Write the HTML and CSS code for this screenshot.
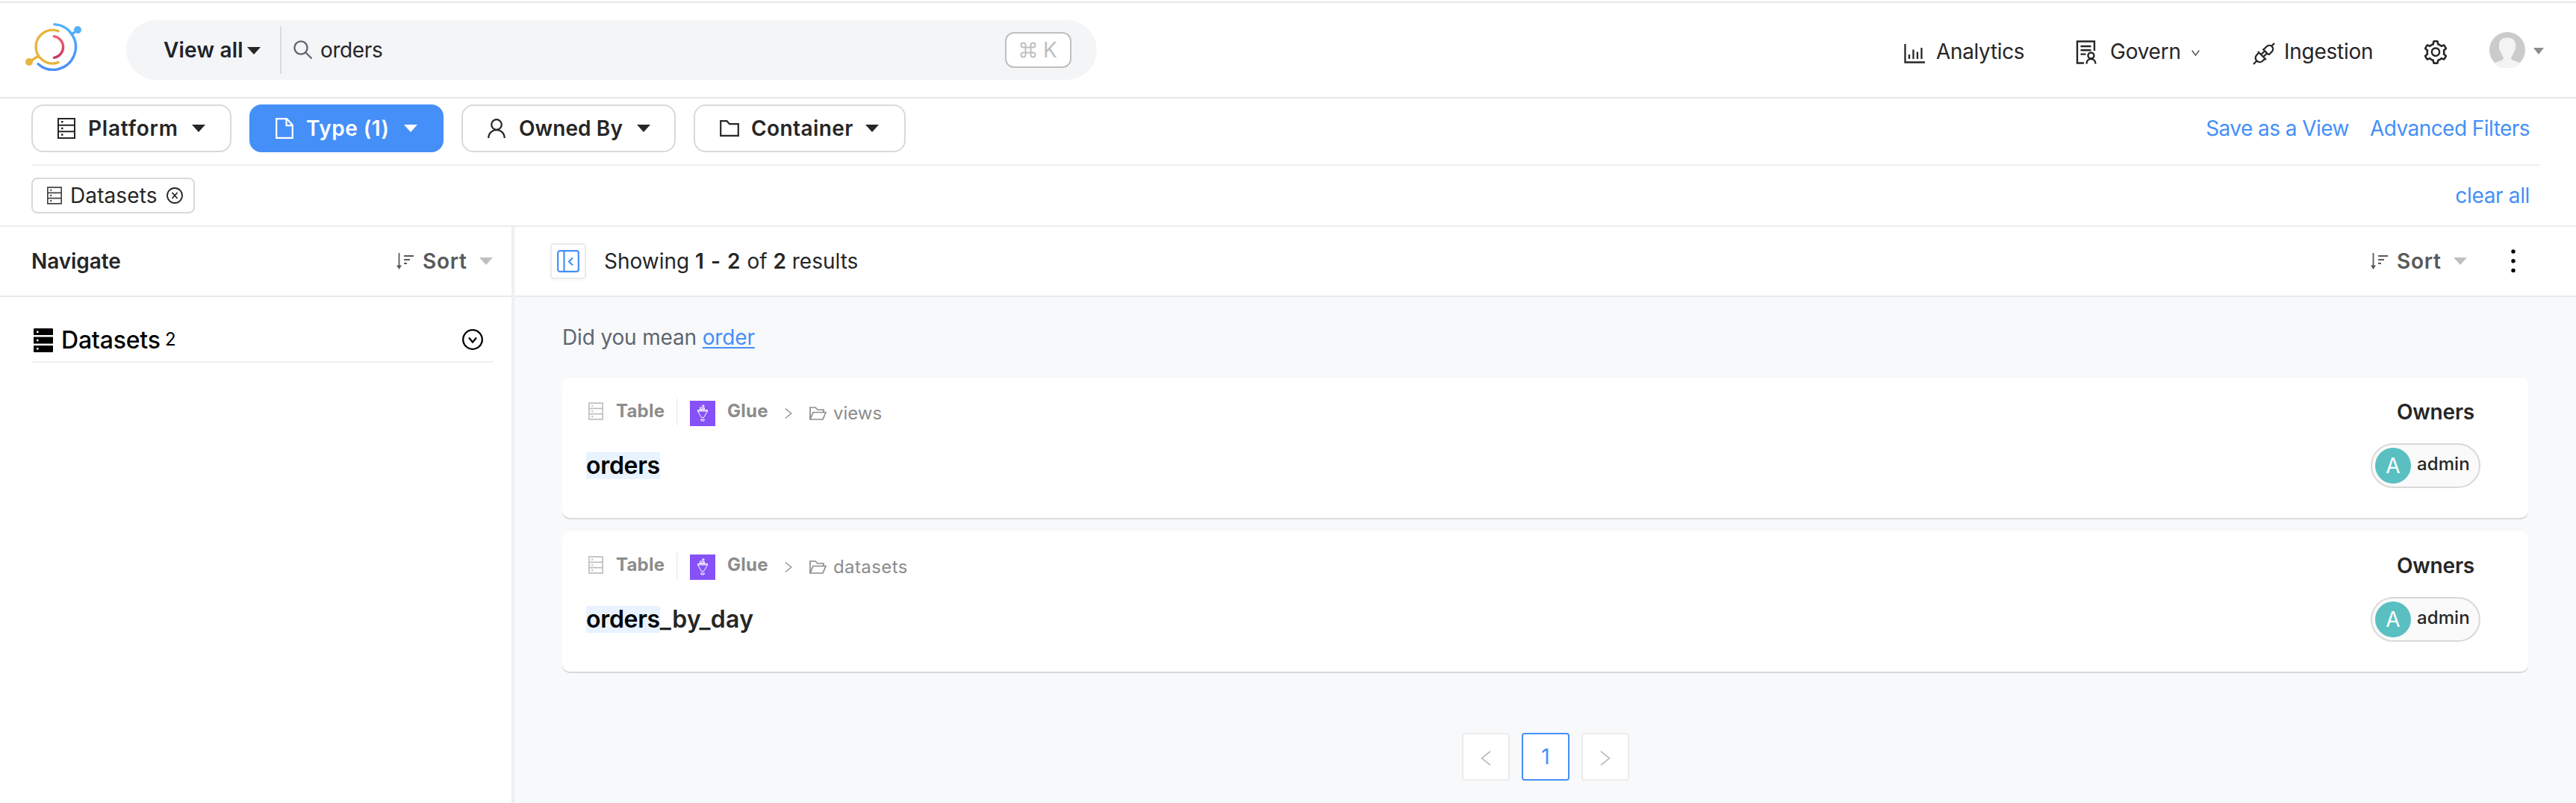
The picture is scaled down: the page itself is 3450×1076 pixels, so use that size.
FILE: index.html
```
<!DOCTYPE html>
<html lang="en">
<head>
<meta charset="utf-8">
<title>orders - Search</title>
<link rel="stylesheet" href="styles.css">
</head>
<body>
<svg class="sprite" aria-hidden="true">
  <symbol id="db" viewBox="0 0 24 28"><path d="M1 1h22v26H1zM1 9.7h22M1 18.3h22" fill="none" stroke="currentColor" stroke-width="2"/><path d="M5 4h2.500v2.500H5zM5 12.700h2.500v2.500H5zM5 21.300h2.500v2.500H5z" fill="currentColor"/></symbol>
  <symbol id="caret" viewBox="0 0 18 11" preserveAspectRatio="none"><path d="M0 0h18L9 11z" fill="currentColor"/></symbol>
  <symbol id="sort" viewBox="0 0 24 22"><path d="M3.5 0v18" fill="none" stroke="currentColor" stroke-width="1.8"/><path d="M0 16.5h7L3.5 22z" fill="currentColor"/><path d="M10 4h13M10 9h8M10 14h4" fill="none" stroke="currentColor" stroke-width="2.2"/></symbol>
  <symbol id="folder-open" viewBox="0 0 23 18"><path d="M1 17V1h7l3 3h8v3.500M1 17L5 7.500h17L18 17z" fill="none" stroke="currentColor" stroke-width="1.700"/></symbol>
  <symbol id="glue" viewBox="0 0 34 34"><path fill="#8652f8" d="M0 0h34v34H0z"/><g fill="none" stroke="#fff" stroke-width="1"><path d="M10.500 12.500h13v1.500l-5 8.500h-3l-5-8.500zM10.500 14h13"/><path d="M13.500 9h2.500v2.500h-2.500zM17.500 9.500h2v2h-2zM16.800 6h2v2h-2zM14.500 25h5l-1 2h-3z"/></g></symbol>
  <symbol id="next" viewBox="0 0 14 20"><path d="M1 .8L12.500 10 1 19.200" fill="none" stroke="currentColor" stroke-width="1.8"/></symbol>
</svg>

<header class="header">
  <svg class="logo" viewBox="0 0 330 270" fill="none" stroke-width="10" stroke-linecap="round">
    <defs><linearGradient id="blue" x1="0" y1="0" x2="0" y2="1"><stop offset="0" stop-color="#55b1fb"/><stop offset="1" stop-color="#468ff9"/></linearGradient>
    <linearGradient id="red" x1="0" y1="0" x2="0" y2="1"><stop offset="0" stop-color="#f0616b"/><stop offset="1" stop-color="#c93a62"/></linearGradient></defs>
    <path d="M158 38A91 91 0 1 1 93 197" stroke="url(#blue)"/>
    <path d="M252 60L228 78" stroke="#50a9fb"/><circle cx="252" cy="60" r="15" fill="#55b1fb"/>
    <path d="M174 65A67 67 0 1 0 174 191M95 165L57 189" stroke="#e6b53f"/><circle cx="57" cy="189" r="15" fill="#e6b53f"/>
    <path d="M157 86A43.500 43.500 0 0 1 157 172" stroke="url(#red)"/>
  </svg>
  <div class="search">
    <span class="view-all">View all</span>
    <svg class="view-caret"><use href="#caret"/></svg>
    <span class="search-line"></span>
    <svg class="search-icon" viewBox="0 0 26 26" fill="none" stroke="#5f6672" stroke-width="2.300"><circle cx="10" cy="10" r="8.600"/><path d="M16 16l8.500 8.500"/></svg>
    <span class="query">orders</span>
    <span class="shortcut"><svg viewBox="0 0 22 22" fill="none" stroke="currentColor" stroke-width="2"><path d="M7.500 7.500h7v7h-7zM7.500 7.500H4.500a3 3 0 1 1 3-3zM14.500 7.500v-3a3 3 0 1 1 3 3zM14.500 14.500h3a3 3 0 1 1-3 3zM7.500 14.500v3a3 3 0 1 1-3-3z"/></svg>K</span>
  </div>
  <nav class="nav">
    <a class="nav-item analytics"><svg viewBox="0 0 28 26" fill="none" stroke="currentColor" stroke-width="2.300"><path d="M1.500 0v24.500H28M7 20v-6M12.500 20V7.500M18 20v-9.500M23.500 20V5"/></svg>Analytics</a>
    <a class="nav-item govern"><svg viewBox="0 0 28 32" fill="none" stroke="currentColor" stroke-width="2.400"><path d="M25 14V1.500H2v29h9M6.500 8h14M6.500 13.300h14M6.500 18.600h7"/><circle cx="20.500" cy="20.500" r="4"/><path d="M14.500 31.500c0-8.500 12-8.500 12 0"/></svg><span>Govern</span><svg class="chevron" viewBox="0 0 11 8"><path d="M.7.700l4.800 6.300L10.300.7" fill="none" stroke="currentColor" stroke-width="1.200"/></svg></a>
    <a class="nav-item ingestion"><svg viewBox="0 0 30 30" fill="none" stroke="currentColor" stroke-width="2.300"><path d="M29 1l-4 4M13.500 8.500l8 8M14.500 9.500l4-4c5-5 12 2 7 7l-4 4M1 29l4-4M7 12l11 11M8.500 13.500l-3 3c-5.500 5.500 2.500 13 8 8l3-3M11.500 16l4-4M14.500 19l4-4"/></svg>Ingestion</a>
    <svg class="gear" viewBox="64 64 896 896"><path fill="currentColor" d="M924.8 625.7l-65.5-56c3.1-19 4.7-38.4 4.7-57.8s-1.6-38.8-4.7-57.8l65.5-56a32.03 32.03 0 009.3-35.2l-.9-2.6a443.74 443.74 0 00-79.7-137.9l-1.8-2.1a32.12 32.12 0 00-35.1-9.5l-81.3 28.9c-30-24.6-63.5-44-99.7-57.6l-15.7-85a32.05 32.05 0 00-25.8-25.700l-2.7-.5c-52.1-9.4-106.900-9.4-159 0l-2.7.5a32.050 32.050 0 00-25.800 25.700l-15.800 85.400a351.860 351.860 0 00-99 57.400l-81.900-29.100a32 32 0 00-35.100 9.500l-1.800 2.100a446.020 446.020 0 00-79.700 137.900l-.9 2.600c-4.500 12.500-.8 26.500 9.300 35.200l66.300 56.600c-3.100 18.800-4.600 38-4.600 57.100 0 19.200 1.500 38.400 4.600 57.100L99 625.500a32.030 32.030 0 00-9.300 35.200l.9 2.600c18.100 50.400 44.900 96.900 79.700 137.900l1.800 2.100a32.120 32.120 0 0035.100 9.500l81.900-29.100c29.800 24.500 63.100 43.900 99 57.400l15.800 85.400a32.050 32.050 0 0025.800 25.700l2.700.5a449.400 449.400 0 00159 0l2.700-.5a32.050 32.050 0 0025.800-25.700l15.700-85a350 350 0 0099.700-57.600l81.300 28.900a32 32 0 0035.100-9.500l1.800-2.100c34.800-41.100 61.600-87.500 79.700-137.900l.9-2.600c4.500-12.300.8-26.300-9.300-35zM788.300 465.900c2.500 15.100 3.800 30.600 3.800 46.100s-1.300 31-3.800 46.100l-6.600 40.100 74.700 63.900a370.030 370.030 0 01-42.600 73.600L721 702.800l-31.400 25.800c-23.900 19.600-50.500 35-79.300 45.800l-38.100 14.300-17.900 97a377.500 377.500 0 01-85 0l-17.900-97.200-37.800-14.500c-28.500-10.800-55-26.200-78.700-45.700l-31.400-25.900-93.400 33.200c-17-22.900-31.200-47.600-42.600-73.600l75.500-64.500-6.500-40c-2.400-14.900-3.700-30.300-3.700-45.500 0-15.300 1.200-30.600 3.700-45.500l6.500-40-75.500-64.500c11.300-26.100 25.600-50.700 42.600-73.600l93.400 33.200 31.400-25.900c23.700-19.500 50.200-34.900 78.700-45.700l37.900-14.300 17.900-97.200c28.100-3.200 56.800-3.200 85 0l17.900 97 38.100 14.300c28.700 10.800 55.400 26.200 79.300 45.800l31.400 25.800 92.800-32.900c17 22.900 31.200 47.600 42.600 73.600L781.800 426l6.500 39.900zM512 326c-97.200 0-176 78.800-176 176s78.800 176 176 176 176-78.800 176-176-78.800-176-176-176zm79.200 255.200A111.600 111.600 0 01512 614c-29.900 0-58-11.700-79.200-32.800A111.600 111.600 0 01400 502c0-29.900 11.700-58 32.800-79.200C454 401.600 482.100 390 512 390c29.900 0 58 11.600 79.200 32.800A111.600 111.600 0 01624 502c0 29.900-11.700 58-32.800 79.200z"/></svg>
    <svg class="avatar" viewBox="0 0 48 48"><circle cx="24" cy="24" r="24" fill="#cbcbcb"/><path d="M24 7.500c-8 0-11.500 4.500-11 11-.5 4 .5 6.500 2 7.500 1 4 3 6.500 4 8 .5 4-6 4.500-13 7.500a24 24 0 0 0 36 0c-7-3-13.500-3.500-13-7.500 1-1.500 3-4 4-8 1.500-1 2.500-3.500 2-7.500.5-6.500-3-11-11-11z" fill="#f3f3f3"/></svg>
    <svg class="avatar-caret"><use href="#caret"/></svg>
  </nav>
</header>

<section class="filters">
  <button class="filter platform"><svg class="ico"><use href="#db"/></svg><span>Platform</span><svg class="caret"><use href="#caret"/></svg></button>
  <button class="filter type"><svg class="ico" viewBox="0 0 24 28" fill="none" stroke="currentColor" stroke-width="2.200"><path d="M1.200 1.200H15L22.800 9.500v17.300H1.200zM14.500 1.200v9h8.300"/></svg><span>Type (1)</span><svg class="caret"><use href="#caret"/></svg></button>
  <button class="filter owner"><svg class="ico" viewBox="0 0 24 26" fill="none" stroke="currentColor" stroke-width="2.200"><circle cx="12" cy="8" r="6.800"/><path d="M1.200 26c.5-14.500 21.100-14.500 21.600 0"/></svg><span>Owned By</span><svg class="caret"><use href="#caret"/></svg></button>
  <button class="filter container"><svg class="ico" viewBox="0 0 26 22" fill="none" stroke="currentColor" stroke-width="2.200"><path d="M1.200 1.200H9.500L13 5.200h11.800v15.600H1.200z"/></svg><span>Container</span><svg class="caret"><use href="#caret"/></svg></button>
  <a class="link save">Save as a View</a>
  <a class="link advanced">Advanced Filters</a>
</section>

<section class="chips">
  <span class="chip"><svg class="chip-db"><use href="#db"/></svg><span>Datasets</span><svg class="chip-x" viewBox="0 0 22 22" fill="none" stroke="currentColor" stroke-width="1.800"><circle cx="11" cy="11" r="10"/><path d="M7.500 7l7 8M14.500 7l-7 8"/></svg></span>
  <a class="link">clear all</a>
</section>

<main class="main">
  <aside class="sidebar">
    <div class="bar side-bar">
      <span class="navigate">Navigate</span>
      <span class="sorter"><svg class="sort-ico"><use href="#sort"/></svg><span>Sort</span><svg class="sort-caret"><use href="#caret"/></svg></span>
    </div>
    <div class="entity">
      <svg class="entity-ico" viewBox="0 0 26 32"><path d="M0 1a1 1 0 0 1 1-1h24a1 1 0 0 1 1 1v8H0zM0 11.500h26v9H0zM0 23h26v8a1 1 0 0 1-1 1H1a1 1 0 0 1-1-1z"/><path d="M4 3.500h2.500V6H4zM4 14.800h2.500v2.500H4zM4 26h2.500v2.500H4z" fill="#fff"/></svg>
      <span class="entity-name">Datasets</span><span class="entity-count">2</span>
      <svg class="entity-open" viewBox="0 0 28 28" fill="none" stroke="#000" stroke-width="2.300"><circle cx="14" cy="14" r="12.800"/><path d="M9 11.500l5 6 5-6"/></svg>
    </div>
  </aside>
  <section class="results">
    <div class="bar result-bar">
      <span class="toggle"><svg viewBox="0 0 30 30" fill="none" stroke="#458ff8" stroke-width="2.200"><rect x="1.200" y="1.200" width="27.600" height="27.600" rx="2.500"/><path d="M9.500 1v28M21 10.500L16 15.500l5 5"/></svg></span>
      <span class="showing">Showing <b>1 - 2</b> of <b class="total">2</b> results</span>
      <span class="sorter right"><svg class="sort-ico"><use href="#sort"/></svg><span>Sort</span><svg class="sort-caret"><use href="#caret"/></svg></span>
      <svg class="dots" viewBox="0 0 6 32"><circle cx="3" cy="3" r="2.700"/><circle cx="3" cy="15.700" r="2.700"/><circle cx="3" cy="28.400" r="2.700"/></svg>
    </div>
    <p class="suggest">Did you mean <a>order</a></p>
    <article class="card">
      <div class="info">
        <div class="crumbs"><svg class="crumb-db"><use href="#db"/></svg><b class="kind">Table</b><i class="sep"></i><svg class="glue"><use href="#glue"/></svg><b class="source">Glue</b><svg class="crumb-next"><use href="#next"/></svg><svg class="crumb-folder"><use href="#folder-open"/></svg><span class="path">views</span></div>
        <h3 class="name"><mark>orders</mark></h3>
      </div>
      <div class="owners"><h4>Owners</h4><span class="pill"><span class="initial">A</span><span class="who">admin</span></span></div>
    </article>
    <article class="card">
      <div class="info">
        <div class="crumbs"><svg class="crumb-db"><use href="#db"/></svg><b class="kind">Table</b><i class="sep"></i><svg class="glue"><use href="#glue"/></svg><b class="source">Glue</b><svg class="crumb-next"><use href="#next"/></svg><svg class="crumb-folder"><use href="#folder-open"/></svg><span class="path long">datasets</span></div>
        <h3 class="name"><mark>orders</mark>_by_day</h3>
      </div>
      <div class="owners"><h4>Owners</h4><span class="pill"><span class="initial">A</span><span class="who">admin</span></span></div>
    </article>
    <div class="pages">
      <span class="page prev"><svg><use href="#next"/></svg></span>
      <span class="page current">1</span>
      <span class="page"><svg><use href="#next"/></svg></span>
    </div>
  </section>
</main>
</body>
</html>
```
FILE: styles.css
```
* { box-sizing: border-box; }
body {
  margin: 0;
  width: 3450px;
  height: 1076px;
  overflow: hidden;
  display: flex;
  flex-direction: column;
  background: #fff;
  color: #262626;
  font: 28px/44px Inter, "Liberation Sans", sans-serif;
  white-space: nowrap;
}
svg { flex: none; display: block; }
.sprite { display: none; }
h3, h4, p { margin: 0; }

/* Header */
.header {
  flex: none;
  height: 130px;
  margin-top: 2px;
  display: flex;
  align-items: flex-start;
  border-top: 2px solid #e6e6e6;
  border-bottom: 2px solid #e8e8e8;
}
.logo { width: 110px; height: 90px; margin: 16px 0 0 20px; }
.search {
  width: 1300px;
  height: 80px;
  margin: 23px 0 0 39px;
  padding: 0 34px 0 50px;
  border-radius: 40px;
  background: #f3f5f7;
  display: flex;
  align-items: center;
}
.view-all { width: 112px; font-weight: 600; letter-spacing: .2px; color: #212328; }
.view-caret { width: 18px; height: 10px; margin-top: 1px; }
.search-line { width: 2px; height: 64px; margin: 0 16px 0 26px; background: #d9dbde; }
.search-icon { width: 26px; height: 26px; }
.query { margin-left: 10px; letter-spacing: -.4px; }
.shortcut {
  width: 89px;
  height: 48px;
  margin-left: auto;
  border: 2px solid #bfbfbf;
  border-radius: 12px;
  background: #fff;
  color: #bfbfbf;
  display: flex;
  align-items: center;
  gap: 9px;
  padding-left: 18px;
}
.shortcut svg { width: 22px; height: 22px; }
.nav { display: flex; align-items: center; height: 64px; margin: 33px 0 0 1081px; }
.nav-item { display: flex; align-items: center; letter-spacing: -.25px; }
.analytics { width: 230px; gap: 15px; letter-spacing: -.35px; }
.analytics svg { width: 28px; height: 26px; margin-top: 6px; }
.govern { width: 237px; }
.govern svg { width: 28px; height: 32px; margin-top: 2px; }
.govern span { width: 92px; margin: 0 17px 0 18px; }
.govern .chevron { width: 11px; height: 8px; margin-top: 4px; }
.ingestion { width: 229px; gap: 12px; }
.ingestion svg { width: 30px; height: 30px; margin-top: 5px; }
.gear { width: 32px; height: 34px; margin-top: 2px; }
.avatar { width: 48px; height: 48px; margin: -4px 0 0 56px; }
.avatar-caret { width: 14px; height: 9px; margin: -1px 0 0 11px; color: #8c8c8c; }

/* Filters */
.filters {
  flex: none;
  height: 90px;
  margin: 0 48px 0 42px;
  border-bottom: 2px solid #f0f0f0;
  padding: 8px 14px 0 0;
  display: flex;
  align-items: flex-start;
}
.filter {
  height: 64px;
  margin: 0 24px 0 0;
  padding: 0 0 0 33px;
  border: 2px solid #d9d9d9;
  border-radius: 16px;
  background: #fff;
  color: #262626;
  font: 600 28px/44px Inter, sans-serif;
  display: flex;
  align-items: center;
  text-align: left;
}
.filter .ico { width: 24px; height: 28px; margin-right: 17px; }
.filter .caret { width: 18px; height: 10px; }
.platform { width: 268px; }
.platform span { width: 139px; letter-spacing: .8px; }
.type { width: 260px; border-color: #458ff8; background: #458ff8; color: #fff; }
.type span { width: 131px; letter-spacing: .5px; }
.owner { width: 287px; }
.filter.owner .ico { height: 26px; margin-right: 18px; }
.owner span { width: 158px; letter-spacing: .1px; }
.container { width: 284px; }
.filter.container .ico { width: 26px; height: 22px; margin-right: 16px; }
.container span { width: 153px; letter-spacing: .4px; }
.link { color: #458ff8; height: 64px; line-height: 64px; letter-spacing: -.55px; }
.save { margin-left: auto; margin-right: 28px; }

/* Selected filters */
.chips {
  flex: none;
  height: 82px;
  padding: 0 62px 0 42px;
  border-bottom: 2px solid #ececec;
  display: flex;
  justify-content: space-between;
  align-items: center;
}
.chips .link { letter-spacing: -.35px; }
.chip {
  width: 219px;
  height: 48px;
  border: 2px solid #d9d9d9;
  border-radius: 8px;
  padding-left: 19px;
  display: flex;
  align-items: center;
}
.chip span { width: 129px; margin-left: 11px; letter-spacing: .1px; }
.chip-db { width: 20px; height: 24px; color: #434343; }
.chip-x { width: 22px; height: 22px; }

/* Main */
.main { flex: 1; display: flex; }
.bar { height: 94px; display: flex; align-items: center; border-bottom: 2px solid #e9eaec; }
.sidebar { width: 689px; border-right: 4px solid #f0f0f0; }
.side-bar { padding: 0 24px 0 42px; justify-content: space-between; }
.navigate { font-weight: 600; letter-spacing: -.1px; }
.sorter { display: flex; align-items: center; width: 130px; color: #595959; font-weight: 600; letter-spacing: .7px; }
.sorter span { width: 76px; }
.sort-ico { width: 24px; height: 22px; margin-right: 11px; }
.sort-caret { width: 18px; height: 10px; color: #bfbfbf; }
.entity {
  height: 88px;
  margin: 0 24px 0 42px;
  border-bottom: 2px solid #f0f0f0;
  padding: 29px 14px 0 3px;
  display: flex;
  align-items: center;
  color: #000;
}
.entity-ico { width: 26px; height: 32px; }
.entity-name { width: 139px; margin-left: 11px; font-size: 32px; font-weight: 500; letter-spacing: -.2px; }
.entity-count { font-size: 24px; margin-top: -2px; }
.entity-open { width: 28px; height: 28px; margin: -2px 0 0 auto; }

/* Results */
.results { flex: 1; display: flex; flex-direction: column; background: #f8f9fb; }
.result-bar { background: #fff; padding-left: 48px; flex: none; }
.toggle {
  width: 48px;
  height: 48px;
  border: 2px solid #ebebeb;
  border-radius: 4px;
  box-shadow: 0 4px 0 rgba(0, 0, 0, .016);
  display: flex;
  align-items: center;
  justify-content: center;
}
.toggle svg { width: 30px; height: 30px; }
.showing { margin-left: 24px; }
.showing b { font-weight: 600; letter-spacing: 1px; }
.showing .total { letter-spacing: 0; }
.right { margin-left: auto; }
.dots { width: 6px; height: 32px; margin: 0 81px 0 58px; }
.suggest { height: 108px; padding: 32px 0 0 64px; color: #5e666e; letter-spacing: -.15px; }
.suggest a { color: #458ff8; text-decoration: underline; text-decoration-thickness: 2px; text-underline-offset: 3px; text-decoration-skip-ink: none; }
.card {
  flex: none;
  width: 2633px;
  height: 188px;
  margin: 0 0 18px 64px;
  padding: 23px 64px 0 32px;
  border-radius: 10px;
  background: #fff;
  box-shadow: 0 2px 0 #d9d9d9;
  display: flex;
  justify-content: space-between;
}
.crumbs { display: flex; align-items: center; height: 44px; color: #8c8c8c; font-size: 24px; }
.crumb-db { width: 20px; height: 24px; margin-left: 3px; color: #bfbfbf; }
.kind { width: 81px; margin-left: 17px; font-weight: 700; letter-spacing: .2px; }
.sep { width: 2px; height: 36px; margin: 2px 16px 0 0; background: #f0f0f0; }
.glue { width: 34px; height: 34px; margin-top: 6px; }
.source { width: 77px; margin-left: 16px; letter-spacing: .3px; }
.crumb-next { width: 10px; height: 14px; margin: 6px 23px 0 0; }
.crumb-folder { width: 23px; height: 18px; margin: 6px 9px 0 0; }
.path { margin-top: 5px; }
.path.long { letter-spacing: .4px; }
.name { margin-top: 29px; font-size: 32px; line-height: 44px; font-weight: 600; letter-spacing: .3px; }
.name mark { display: inline-block; height: 36px; line-height: 36px; background: #e8f3ff; color: #000; letter-spacing: -.3px; }
.owners { width: 147px; }
.owners h4 { height: 44px; padding-left: 35px; font-size: 28px; font-weight: 600; line-height: 46px; letter-spacing: -.2px; }
.pill {
  width: 147px;
  height: 60px;
  margin-top: 21px;
  padding-left: 4px;
  border: 2px solid #d9d9d9;
  border-radius: 30px;
  background: #fafafa;
  display: flex;
  align-items: center;
}
.initial { width: 48px; height: 48px; border-radius: 50%; background: #5abfc1; color: #fff; line-height: 49px; text-align: center; }
.who { margin: -5px 0 0 8px; font-size: 24px; font-weight: 500; letter-spacing: .1px; }
.pages { display: flex; gap: 16px; margin: 64px 0 0 1269px; }
.page {
  width: 64px;
  height: 64px;
  border: 2px solid #ececec;
  border-radius: 4px;
  background: #fff;
  color: #bfbfbf;
  display: flex;
  align-items: center;
  justify-content: center;
}
.page svg { width: 14px; height: 20px; margin-top: 4px; }
.prev svg { transform: scaleX(-1); }
.current { border-color: #458ff8; color: #458ff8; }
```
